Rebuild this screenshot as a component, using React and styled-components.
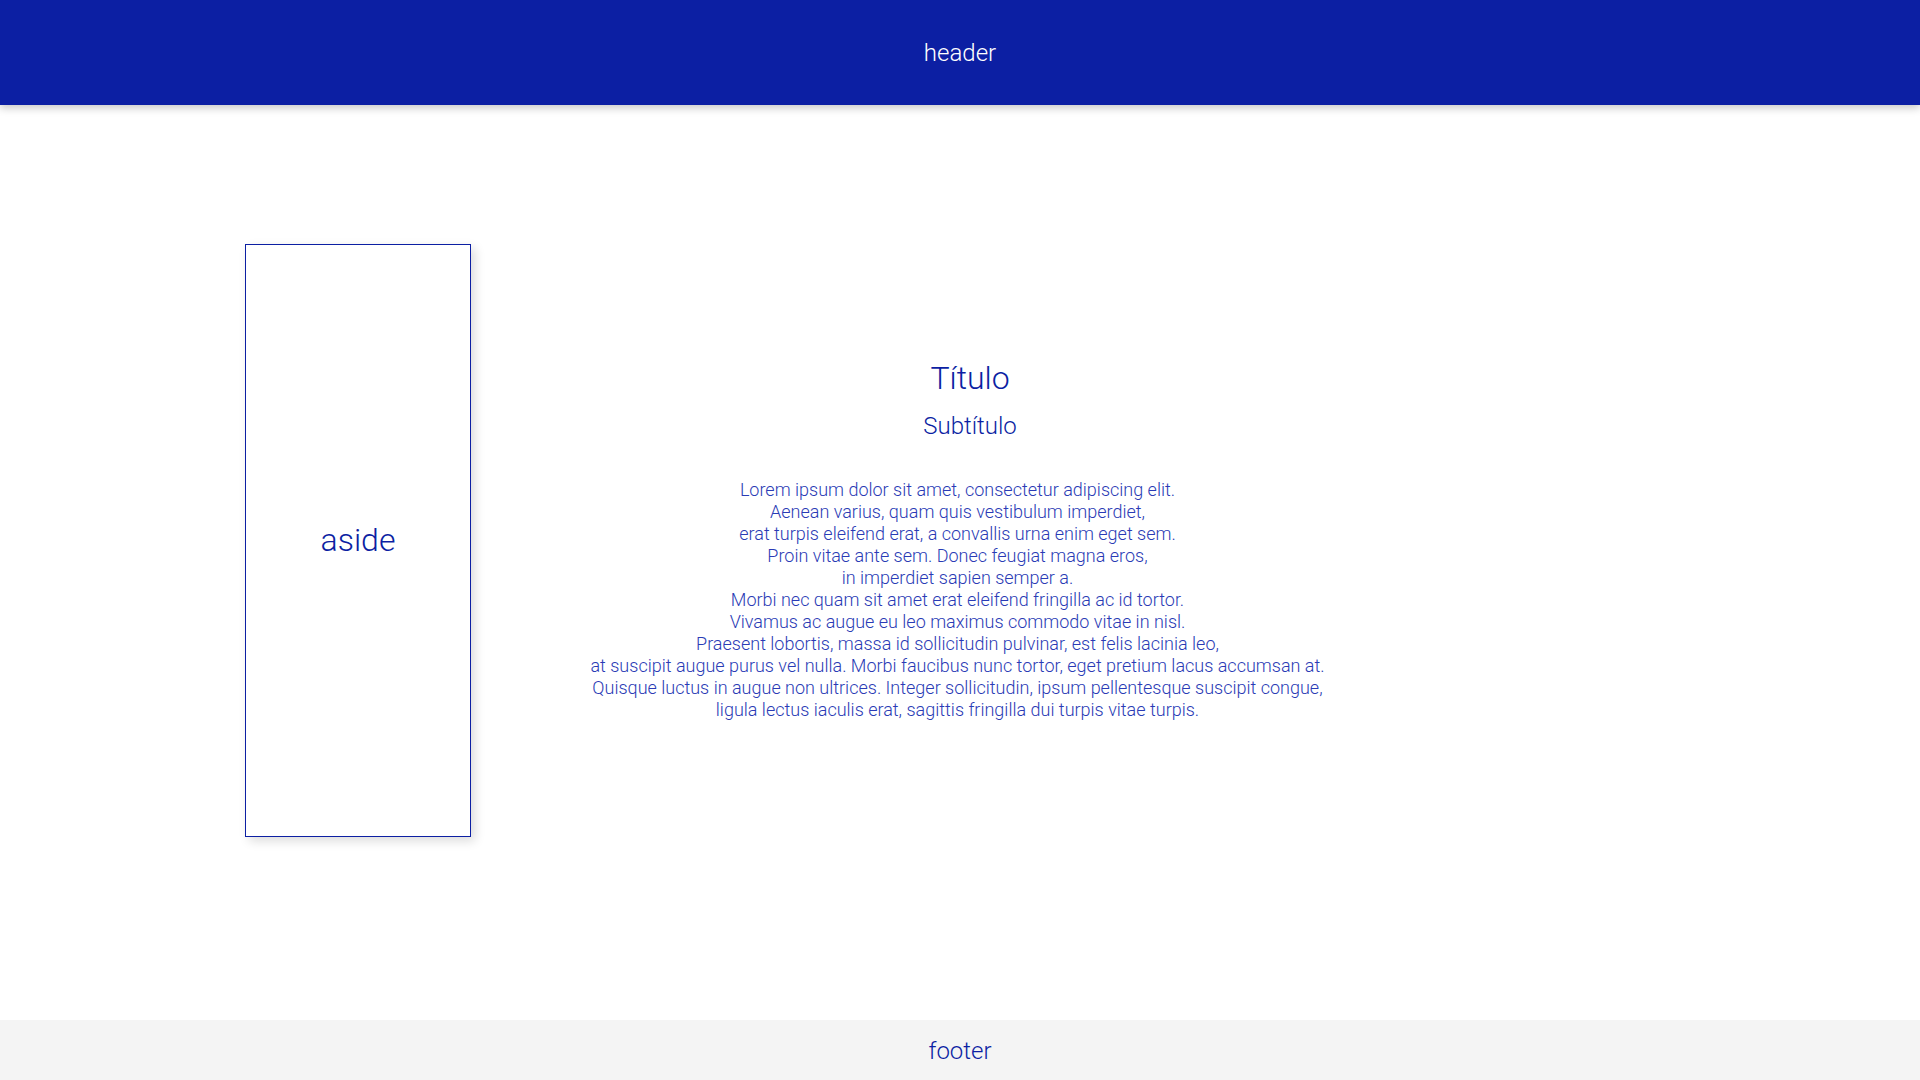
import React from "react";
import styled, { createGlobalStyle } from "styled-components";

const BLUE = "#0c1fa3";

const Global = createGlobalStyle`
  html, body { margin: 0; padding: 0; }
  body {
    font-family: Roboto, "Liberation Sans", sans-serif;
    font-weight: 300;
    background: #ffffff;
    color: ${BLUE};
  }
`;

const Page = styled.div`
  display: grid;
  grid-template-rows: 105px 1fr 60px;
  height: 100vh;
`;

const Header = styled.header`
  position: relative;
  z-index: 1;
  display: flex;
  align-items: center;
  justify-content: center;
  background: ${BLUE};
  color: #ffffff;
  font-size: 24px;
  font-weight: 300;
  box-shadow: 0 3px 8px rgba(0, 0, 0, 0.22);
`;

const Main = styled.main`
  display: grid;
  grid-template-columns: 1fr auto 1fr;
  align-items: center;
  padding-bottom: 45px;
`;

const Aside = styled.aside`
  justify-self: start;
  margin-left: 245px;
  width: 226px;
  height: 593px;
  box-sizing: border-box;
  border: 1px solid ${BLUE};
  box-shadow: 4px 4px 10px rgba(0, 0, 0, 0.14);
  display: flex;
  align-items: center;
  justify-content: center;
  font-size: 32px;
  font-weight: 300;
  color: ${BLUE};
`;

const Content = styled.section`
  display: flex;
  flex-direction: column;
  align-items: center;
  text-align: center;
`;

const Title = styled.h1`
  margin: 0;
  padding-left: 20px;
  font-size: 32px;
  line-height: 38px;
  font-weight: 300;
`;

const Subtitle = styled.h2`
  margin: 15px 0 0;
  padding-left: 20px;
  font-size: 24px;
  line-height: 28px;
  font-weight: 300;
`;

const Body = styled.p`
  margin: 39px 0 0;
  padding-right: 5px;
  font-size: 18px;
  line-height: 22px;
  font-weight: 300;
  color: #2a3bb5;
`;

const Footer = styled.footer`
  display: flex;
  align-items: center;
  justify-content: center;
  padding-top: 2px;
  background: #f4f4f4;
  color: ${BLUE};
  font-size: 24px;
  font-weight: 300;
`;

const lines = [
  "Lorem ipsum dolor sit amet, consectetur adipiscing elit.",
  "Aenean varius, quam quis vestibulum imperdiet,",
  "erat turpis eleifend erat, a convallis urna enim eget sem.",
  "Proin vitae ante sem. Donec feugiat magna eros,",
  "in imperdiet sapien semper a.",
  "Morbi nec quam sit amet erat eleifend fringilla ac id tortor.",
  "Vivamus ac augue eu leo maximus commodo vitae in nisl.",
  "Praesent lobortis, massa id sollicitudin pulvinar, est felis lacinia leo,",
  "at suscipit augue purus vel nulla. Morbi faucibus nunc tortor, eget pretium lacus accumsan at.",
  "Quisque luctus in augue non ultrices. Integer sollicitudin, ipsum pellentesque suscipit congue,",
  "ligula lectus iaculis erat, sagittis fringilla dui turpis vitae turpis.",
];

export default function App() {
  return (
    <>
      <Global />
      <Page>
        <Header>header</Header>
        <Main>
          <Aside>aside</Aside>
          <Content>
            <Title>Título</Title>
            <Subtitle>Subtítulo</Subtitle>
            <Body>
              {lines.map((l, i) => (
                <React.Fragment key={i}>
                  {l}
                  {i < lines.length - 1 && <br />}
                </React.Fragment>
              ))}
            </Body>
          </Content>
          <div />
        </Main>
        <Footer>footer</Footer>
      </Page>
    </>
  );
}
